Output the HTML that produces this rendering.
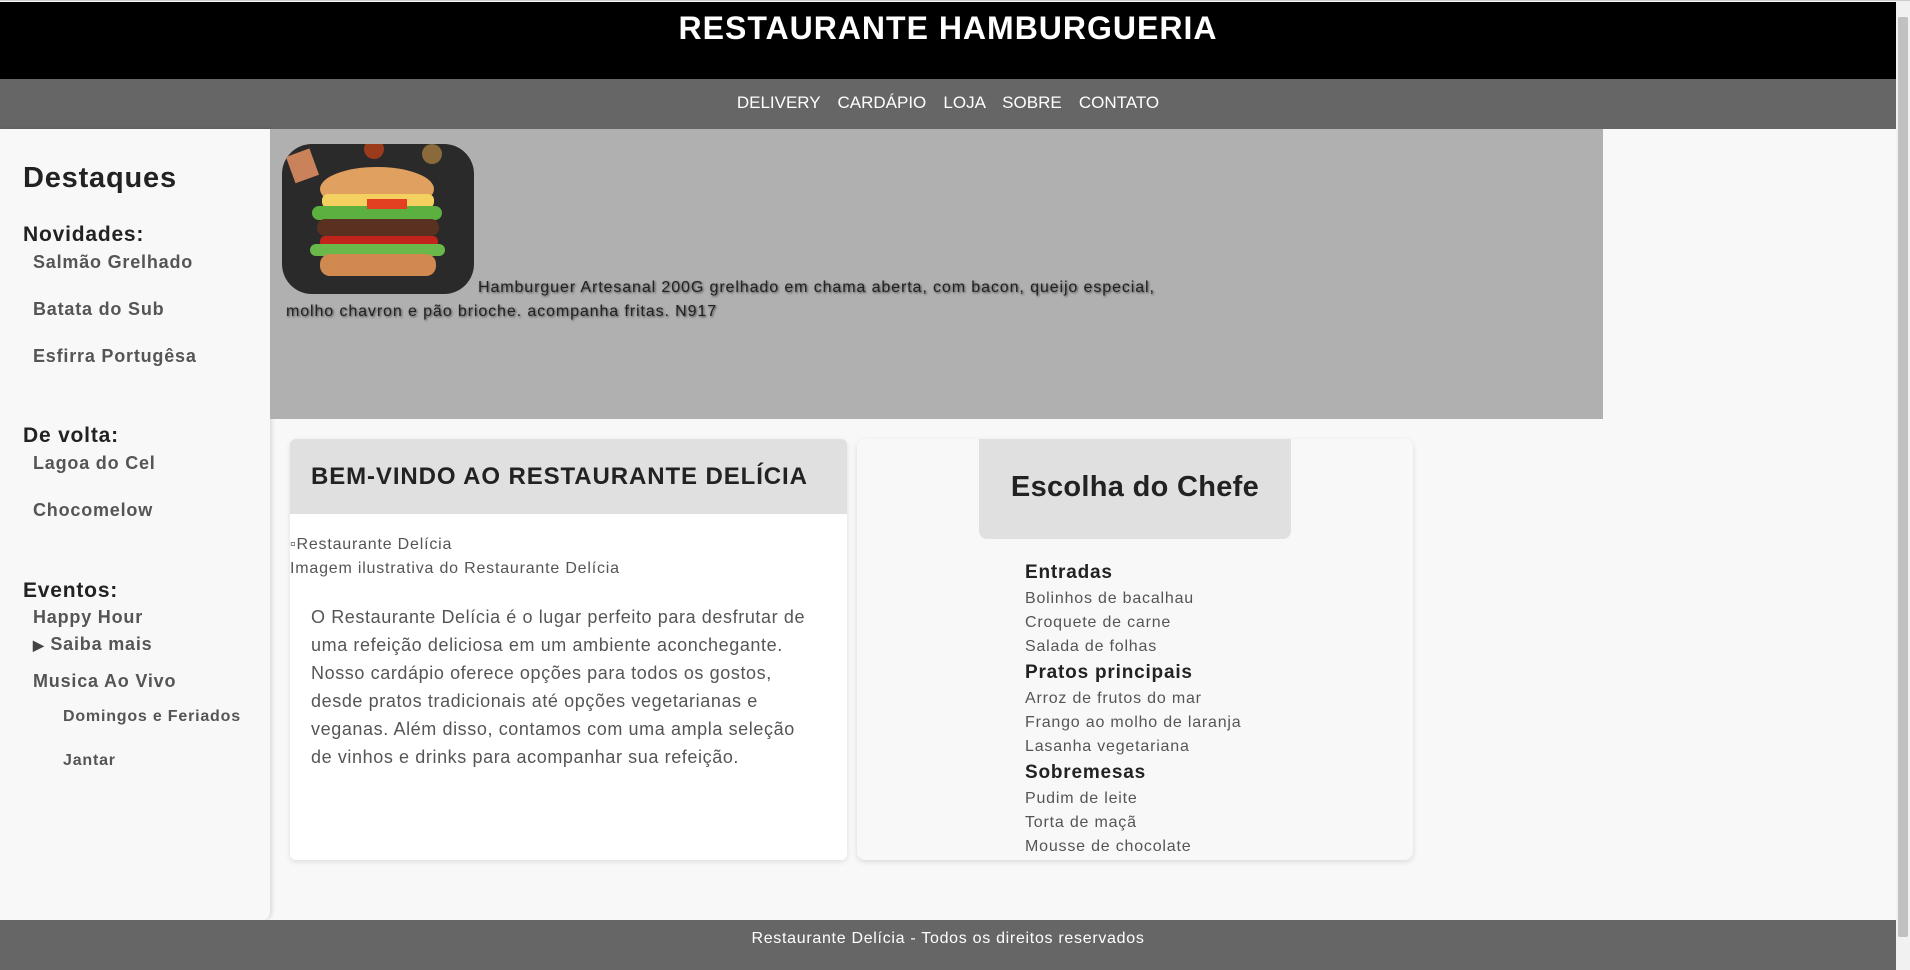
<!DOCTYPE html>
<html><head><meta charset="utf-8"><style>
*{margin:0;padding:0;box-sizing:border-box}
body{width:1910px;height:969px;overflow:hidden;background:#f8f8f8;font-family:"Liberation Sans",sans-serif;position:relative;border-top:1px solid #ccc;letter-spacing:0.8px}
.a{position:absolute;white-space:nowrap}
#hdr{position:absolute;left:0;top:1px;width:1896px;height:77px;background:#000}
#nav{position:absolute;left:0;top:78px;width:1896px;height:50px;background:#666}
#sb{position:absolute;left:0;top:128px;width:270px;height:791px;background:#f8f8f8;box-shadow:2px 0 4px rgba(0,0,0,.12);border-bottom-right-radius:8px}
#hero{position:absolute;left:270px;top:128px;width:1333px;height:290px;background:#b0b0b0}
#ft{position:absolute;left:0;top:919px;width:1896px;height:50px;background:#666}
#scr{position:absolute;left:1896px;top:0;width:14px;height:969px;background:#f1f1f1}
#thumb{position:absolute;left:1898px;top:16px;width:10px;height:920px;background:#c1c1c1;border-radius:2px}
.c1{position:absolute;left:290px;top:438px;width:557px;height:421px;background:#fff;border-radius:6px;box-shadow:0 2px 6px rgba(0,0,0,.1);overflow:hidden}
.c2{position:absolute;left:857px;top:438px;width:556px;height:421px;background:#f8f8f8;border-radius:8px;box-shadow:0 2px 6px rgba(0,0,0,.12)}
.sh{font-weight:bold;color:#222;font-size:21px}
.si{font-weight:bold;color:#555;font-size:18px}
.li{font-size:16px;color:#555}
.lh{font-size:19px;font-weight:bold;color:#222}
</style></head><body>
<div id="hdr"></div>
<div class="a" style="left:0;width:1896px;text-align:center;top:9px;color:#fff;font-weight:bold;font-size:32px;letter-spacing:1px">RESTAURANTE HAMBURGUERIA</div>
<div id="nav"></div>
<div class="a" style="left:0;width:1896px;text-align:center;top:92px;color:#fff;font-size:17px;letter-spacing:0;word-spacing:1px">DELIVERY &nbsp; CARDÁPIO &nbsp; LOJA &nbsp; SOBRE &nbsp; CONTATO</div>
<div id="sb"></div>
<div class="a" style="left:23px;top:161px;font-size:29px;font-weight:bold;color:#222">Destaques</div>
<div class="a sh" style="left:23px;top:222px">Novidades:</div>
<div class="a si" style="left:33px;top:251px">Salmão Grelhado</div>
<div class="a si" style="left:33px;top:298px">Batata do Sub</div>
<div class="a si" style="left:33px;top:345px">Esfirra Portugêsa</div>
<div class="a sh" style="left:23px;top:423px">De volta:</div>
<div class="a si" style="left:33px;top:452px">Lagoa do Cel</div>
<div class="a si" style="left:33px;top:499px">Chocomelow</div>
<div class="a sh" style="left:23px;top:578px">Eventos:</div>
<div class="a si" style="left:33px;top:606px">Happy Hour</div>
<div class="a si" style="left:33px;top:633px"><span style="font-size:14px;color:#444">&#9654;</span> Saiba mais</div>
<div class="a si" style="left:33px;top:670px">Musica Ao Vivo</div>
<div class="a" style="left:63px;top:707px;font-size:16px;font-weight:bold;color:#555">Domingos e Feriados</div>
<div class="a" style="left:63px;top:751px;font-size:16px;font-weight:bold;color:#555">Jantar</div>
<div id="hero"></div>
<svg class="a" style="left:282px;top:143px" width="192" height="150" viewBox="0 0 192 150">
<defs><clipPath id="cp"><rect width="192" height="150" rx="30"/></clipPath></defs>
<g clip-path="url(#cp)">
<rect width="192" height="150" fill="#2a2a2a"/>
<rect x="8" y="8" width="25" height="28" fill="#c9825a" transform="rotate(-20 20 22)"/>
<circle cx="92" cy="5" r="10" fill="#9c3a1c"/><circle cx="150" cy="10" r="10" fill="#8a6a3a"/>
<ellipse cx="95" cy="45" rx="57" ry="22" fill="#e0a060"/>
<rect x="40" y="50" width="112" height="14" rx="6" fill="#f4d060"/>
<rect x="30" y="62" width="130" height="14" rx="7" fill="#5cb040"/>
<rect x="85" y="55" width="40" height="10" fill="#e24020"/>
<rect x="35" y="75" width="122" height="17" rx="8" fill="#5a3020"/>
<rect x="38" y="92" width="118" height="11" rx="5" fill="#c0241a"/>
<rect x="28" y="100" width="135" height="12" rx="6" fill="#6ab84a"/>
<rect x="38" y="110" width="116" height="22" rx="10" fill="#d08a50"/>
</g></svg>
<div class="a" style="left:478px;top:278px;font-size:16px;color:#222;text-shadow:1px 1px 2px #444;letter-spacing:0.9px">Hamburguer Artesanal 200G grelhado em chama aberta, com bacon, queijo especial,</div>
<div class="a" style="left:286px;top:302px;font-size:16px;color:#222;text-shadow:1px 1px 2px #444;letter-spacing:0.9px">molho chavron e pão brioche. acompanha fritas. N917</div>
<div class="c1">
<div style="height:75px;background:#e0e0e0"></div>
<div class="a" style="left:21px;top:24px;font-size:24px;font-weight:bold;color:#222;letter-spacing:0.9px">BEM-VINDO AO RESTAURANTE DELÍCIA</div>
<div class="a" style="left:0;top:97px;font-size:16px;color:#555">▫Restaurante Delícia</div>
<div class="a" style="left:0;top:121px;font-size:16px;color:#555">Imagem ilustrativa do Restaurante Delícia</div>
<div class="a" style="left:21px;top:164px;font-size:18px;color:#555;line-height:28px;letter-spacing:0.6px">O Restaurante Delícia é o lugar perfeito para desfrutar de<br>uma refeição deliciosa em um ambiente aconchegante.<br>Nosso cardápio oferece opções para todos os gostos,<br>desde pratos tradicionais até opções vegetarianas e<br>veganas. Além disso, contamos com uma ampla seleção<br>de vinhos e drinks para acompanhar sua refeição.</div>
</div>
<div class="c2">
<div style="position:absolute;left:122px;top:0;width:312px;height:100px;background:#e0e0e0;border-radius:0 0 8px 8px"></div>
<div class="a" style="left:122px;width:312px;text-align:center;top:32px;font-size:29px;font-weight:bold;color:#222;letter-spacing:0.3px">Escolha do Chefe</div>
<div class="a lh" style="left:168px;top:123px">Entradas</div>
<div class="a li" style="left:168px;top:151px">Bolinhos de bacalhau</div>
<div class="a li" style="left:168px;top:175px">Croquete de carne</div>
<div class="a li" style="left:168px;top:199px">Salada de folhas</div>
<div class="a lh" style="left:168px;top:223px">Pratos principais</div>
<div class="a li" style="left:168px;top:251px">Arroz de frutos do mar</div>
<div class="a li" style="left:168px;top:275px">Frango ao molho de laranja</div>
<div class="a li" style="left:168px;top:299px">Lasanha vegetariana</div>
<div class="a lh" style="left:168px;top:323px">Sobremesas</div>
<div class="a li" style="left:168px;top:351px">Pudim de leite</div>
<div class="a li" style="left:168px;top:375px">Torta de maçã</div>
<div class="a li" style="left:168px;top:399px">Mousse de chocolate</div>
</div>
<div id="ft"></div>
<div class="a" style="left:0;width:1896px;text-align:center;top:929px;color:#fff;font-size:16px;letter-spacing:0.7px">Restaurante Delícia - Todos os direitos reservados</div>
<div id="scr"></div><div id="thumb"></div>
</body></html>
